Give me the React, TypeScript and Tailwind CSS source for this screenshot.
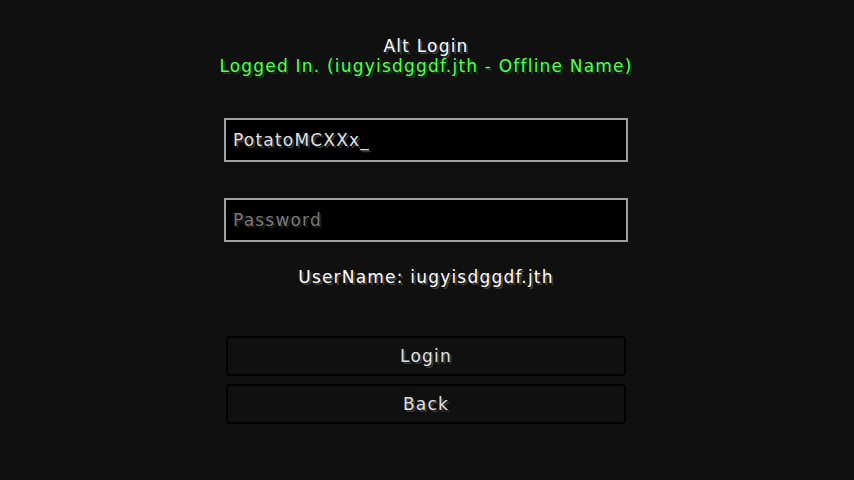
import * as React from 'react';

const font = "font-['DejaVu_Sans',sans-serif]";

const McButton = ({ label }: { label: string }) => {
  return (
    <button
      type="button"
      className={`w-[400px] h-[40px] border-2 border-black rounded-[4px] bg-[#101010] text-[#e0e0e0] text-[17px] leading-[18px] tracking-[1.2px] [text-shadow:2px_2px_0_#383838] ${font}`}
    >
      {label}
    </button>
  );
};

const App = () => {
  const [username, setUsername] = React.useState<string>('PotatoMCXXx');

  return (
    <div
      className={`w-full h-[480px] bg-[#101010] flex flex-col items-center pt-[36px] pr-[2px] text-[17px] leading-[18px] tracking-[1.2px] ${font}`}
    >
      <div className="leading-[20px] text-white [text-shadow:2px_2px_0_#3f3f3f] whitespace-nowrap">
        Alt Login
      </div>
      <div className="leading-[20px] text-[#55ff55] [text-shadow:2px_2px_0_#153f15] whitespace-nowrap">
        Logged In. (iugyisdggdf.jth - Offline Name)
      </div>

      <div className="mt-[42px] w-[404px] h-[44px] border-2 border-[#a0a0a0] bg-black flex items-center px-[7px]">
        <span className="text-[#e0e0e0] [text-shadow:2px_2px_0_#383838] whitespace-nowrap">
          {username}_
        </span>
      </div>

      <div className="mt-[36px] w-[404px] h-[44px] border-2 border-[#a0a0a0] bg-black flex items-center px-[7px]">
        <span className="text-[#7a7a7a] [text-shadow:2px_2px_0_#1e1e1e] whitespace-nowrap">
          Password
        </span>
      </div>

      <div className="mt-[26px] text-white [text-shadow:2px_2px_0_#3f3f3f] whitespace-nowrap">
        UserName: iugyisdggdf.jth
      </div>

      <div className="mt-[50px] flex flex-col gap-[8px]">
        <McButton label="Login" />
        <McButton label="Back" />
      </div>
    </div>
  );
};

export default App;
